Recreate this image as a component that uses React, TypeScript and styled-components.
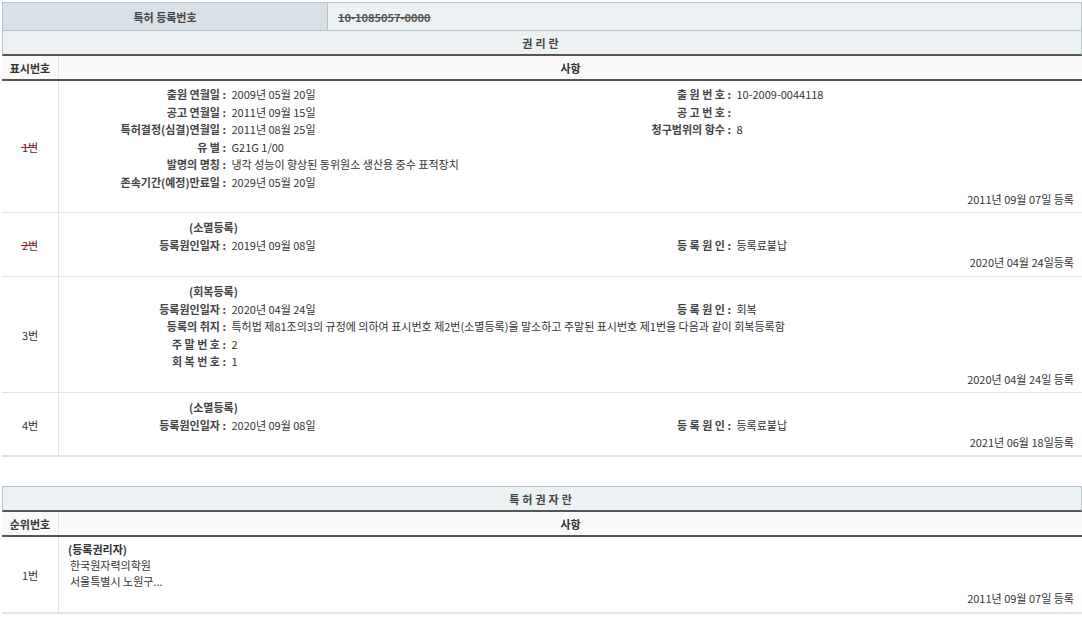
import React from "react";
import styled, { createGlobalStyle } from "styled-components";

const Global = createGlobalStyle`
  body { margin: 0; background: #fff; font-family: "Noto Sans CJK KR", "Noto Sans", sans-serif; font-size: 11px; color: #333; line-height: 16px; }
`;
const Page = styled.div`padding: 2px 0 0 2px; width: 1080px;`;
const Table = styled.div`border-bottom: 1px solid #e3e3e3; margin-bottom: ${p => p.$mb || 0}px;`;
const TopRow = styled.div`display: grid; grid-template-columns: 325px 1fr; height: 27px; border: 1px solid #b7c2c9; border-bottom: none;`;
const TopHead = styled.div`background: #d9e1e8; display: flex; align-items: center; justify-content: center; font-weight: bold; border-right: 1px solid #b7c2c9; color: #444;`;
const TopVal = styled.div`background: #ecf1f4; display: flex; align-items: center; padding-left: 10px; font-weight: bold; color: #555; text-decoration: line-through;`;
const Title = styled.div`height: 23px; background: #ecf1f4; border: 1px solid #b7c2c9; border-bottom: 2px solid #555; display: flex; align-items: center; justify-content: center; font-weight: bold; letter-spacing: 3px; color: #444;`;
const Row = styled.div`display: grid; grid-template-columns: 57px 1fr; border-bottom: ${p => p.$head ? "2px solid #555" : "1px solid #e3e3e3"}; background: ${p => p.$head ? "#fafafa" : "#fff"}; height: ${p => p.$h}px; box-sizing: border-box;`;
const NumCell = styled.div`display: flex; align-items: center; justify-content: center; border-right: 1px solid #e3e3e3; font-weight: ${p => p.$bold ? "bold" : "normal"};`;
const Strike = styled.span`position: relative; &::after { content: ""; position: absolute; left: -1px; right: 2px; top: 50%; height: 1px; background: #e00; }`;
const Content = styled.div`display: flex; flex-direction: column; padding: ${p => p.$pad || "5px 8px 4px 0"}; ${p => p.$center ? "align-items:center;justify-content:center;font-weight:bold;" : ""}`;
const Grid = styled.div`display: grid; grid-template-columns: 170px 390px 115px 1fr; line-height: 17.5px;`;
const Lab = styled.div`text-align: right; font-weight: bold; color: #444; padding-right: 3px; white-space: nowrap;`;
const Val = styled.div`white-space: nowrap; grid-column: ${p => p.$span ? "span " + p.$span : "auto"};`;
const Sub = styled.div`padding-left: 130px; font-weight: bold; color: #444; line-height: 17.5px;`;
const Date = styled.div`text-align: right; margin-top: auto; line-height: 16px;`;
const Plain = styled.div`line-height: 16px; padding-left: ${p => p.$pl || 9}px; font-weight: ${p => p.$b ? "bold" : "normal"};`;

const L = ({ l, v }: any) => (<><Lab>{l} :</Lab><Val>&nbsp;{v}</Val></>);

export default function App() {
  return (
    <Page>
      <Global />
      <Table $mb={29}>
        <TopRow><TopHead>특허 등록번호</TopHead><TopVal>10-1085057-0000</TopVal></TopRow>
        <Title>권리란</Title>
        <Row $head $h={25}><NumCell $bold>표시번호</NumCell><Content $center $pad="0">사항</Content></Row>
        <Row $h={132}>
          <NumCell><Strike>1번</Strike></NumCell>
          <Content $pad="5px 8px 6px 0">
            <Grid>
              <L l="출원 연월일" v="2009년 05월 20일" /><L l="출 원 번 호" v="10-2009-0044118" />
              <L l="공고 연월일" v="2011년 09월 15일" /><L l="공 고 번 호" v="" />
              <L l="특허결정(심결)연월일" v="2011년 08월 25일" /><L l="청구범위의 항수" v="8" />
              <Lab>유 별 :</Lab><Val $span={3}>&nbsp;G21G 1/00</Val>
              <Lab>발명의 명칭 :</Lab><Val $span={3}>&nbsp;냉각 성능이 향상된 동위원소 생산용 중수 표적장치</Val>
              <Lab>존속기간(예정)만료일 :</Lab><Val $span={3}>&nbsp;2029년 05월 20일</Val>
            </Grid>
            <Date>2011년 09월 07일 등록</Date>
          </Content>
        </Row>
        <Row $h={64}>
          <NumCell><Strike>2번</Strike></NumCell>
          <Content $pad="6px 8px 6px 0">
            <Sub>(소멸등록)</Sub>
            <Grid><L l="등록원인일자" v="2019년 09월 08일" /><L l="등 록 원 인" v="등록료불납" /></Grid>
            <Date>2020년 04월 24일등록</Date>
          </Content>
        </Row>
        <Row $h={116}>
          <NumCell>3번</NumCell>
          <Content $pad="6px 8px 6px 0">
            <Sub>(회복등록)</Sub>
            <Grid>
              <L l="등록원인일자" v="2020년 04월 24일" /><L l="등 록 원 인" v="회복" />
              <Lab>등록의 취지 :</Lab><Val $span={3}>&nbsp;특허법 제81조의3의 규정에 의하여 표시번호 제2번(소멸등록)을 말소하고 주말된 표시번호 제1번을 다음과 같이 회복등록함</Val>
              <Lab>주 말 번 호 :</Lab><Val $span={3}>&nbsp;2</Val>
              <Lab>회 복 번 호 :</Lab><Val $span={3}>&nbsp;1</Val>
            </Grid>
            <Date>2020년 04월 24일 등록</Date>
          </Content>
        </Row>
        <Row $h={63}>
          <NumCell>4번</NumCell>
          <Content $pad="6px 8px 6px 0">
            <Sub>(소멸등록)</Sub>
            <Grid><L l="등록원인일자" v="2020년 09월 08일" /><L l="등 록 원 인" v="등록료불납" /></Grid>
            <Date>2021년 06월 18일등록</Date>
          </Content>
        </Row>
      </Table>
      <Table>
        <Title>특허권자란</Title>
        <Row $head $h={25}><NumCell $bold>순위번호</NumCell><Content $center $pad="0">사항</Content></Row>
        <Row $h={76}>
          <NumCell>1번</NumCell>
          <Content $pad="4px 8px 6px 0">
            <Plain $b>(등록권리자)</Plain>
            <Plain $pl={11}>한국원자력의학원</Plain>
            <Plain $pl={11}>서울특별시 노원구...</Plain>
            <Date>2011년 09월 07일 등록</Date>
          </Content>
        </Row>
      </Table>
    </Page>
  );
}
